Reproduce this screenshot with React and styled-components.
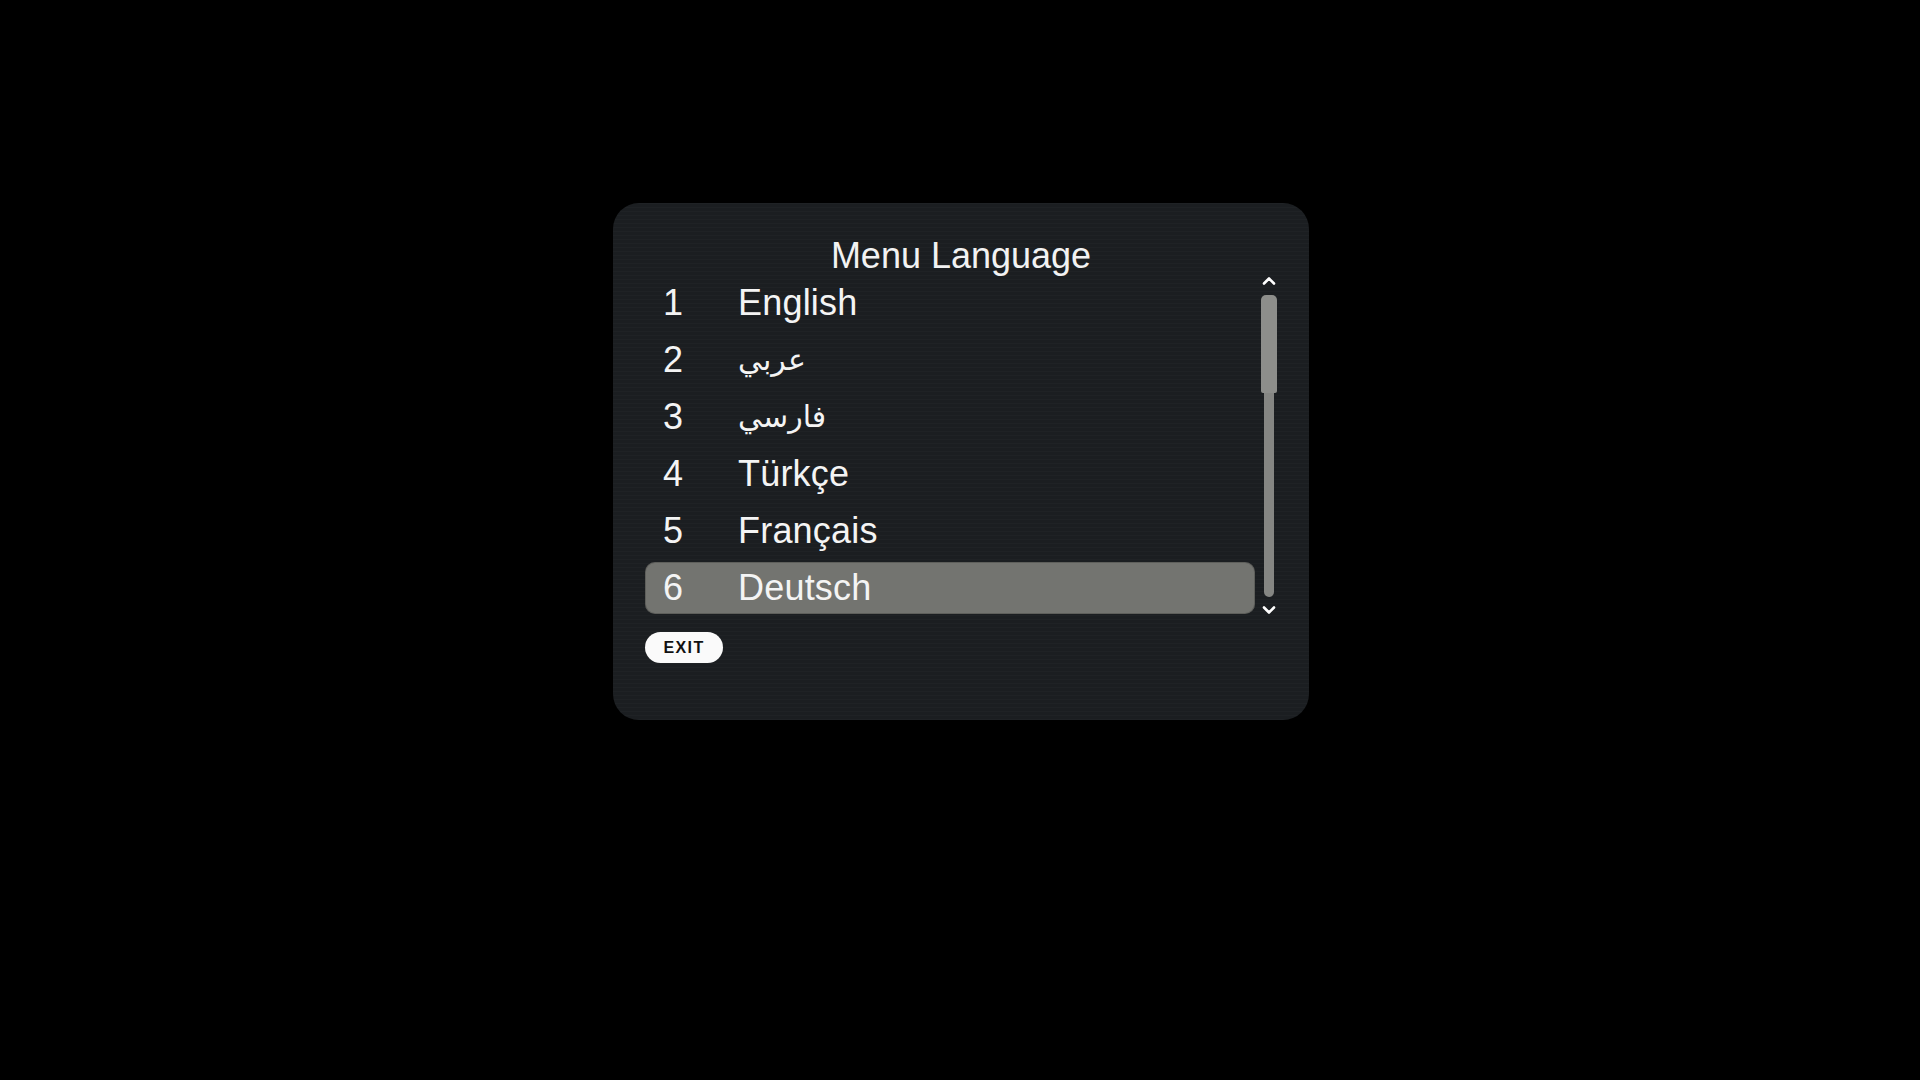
import React from "react";
import styled, { createGlobalStyle } from "styled-components";

const languages = [
  { n: 1, label: "English" },
  { n: 2, label: "عربي", rtl: true },
  { n: 3, label: "فارسي", rtl: true },
  { n: 4, label: "Türkçe" },
  { n: 5, label: "Français" },
  { n: 6, label: "Deutsch" },
];

const selected = 6;

const Chevron = ({ up }) => (
  <svg width="14" height="8" viewBox="0 0 14 8">
    <polyline
      points={up ? "2,6.5 7,1.5 12,6.5" : "2,1.5 7,6.5 12,1.5"}
      fill="none"
      stroke="#ffffff"
      strokeWidth="2.6"
      strokeLinecap="round"
      strokeLinejoin="round"
    />
  </svg>
);

const App = () => {
  return (
    <Screen>
      <GlobalStyle />
      <Panel>
        <Title>Menu Language</Title>
        <Body>
          <List>
            {languages.map((l) => (
              <Row key={l.n} active={l.n === selected}>
                <Num>{l.n}</Num>
                <Label dir={l.rtl ? "rtl" : "ltr"} rtl={l.rtl}>
                  {l.label}
                </Label>
              </Row>
            ))}
          </List>
          <Scroll>
            <ArrowUp>
              <Chevron up />
            </ArrowUp>
            <Thumb />
            <Track />
            <ArrowDown>
              <Chevron />
            </ArrowDown>
          </Scroll>
        </Body>
        <ExitButton>EXIT</ExitButton>
      </Panel>
    </Screen>
  );
};

export default App;

const GlobalStyle = createGlobalStyle`
  body {
    margin: 0;
    background: #000;
    font-family: "Liberation Sans", "DejaVu Sans", Arial, sans-serif;
  }
`;

const Screen = styled.div`
  width: 1920px;
  height: 1080px;
  background: #000;
  display: flex;
  justify-content: center;
  align-items: flex-start;
  padding-top: 203px;
  box-sizing: border-box;
`;

const Panel = styled.div`
  width: 696px;
  height: 517px;
  box-sizing: border-box;
  margin-left: 2px;
  padding: 33px 32px 0 32px;
  border-radius: 26px;
  background-color: #1b1e21;
  background-image: repeating-linear-gradient(
    0deg,
    rgba(255, 255, 255, 0.018) 0px,
    rgba(255, 255, 255, 0.018) 1px,
    transparent 1px,
    transparent 4px
  );
  display: flex;
  flex-direction: column;
`;

const Title = styled.div`
  font-size: 36px;
  line-height: 40px;
  height: 41px;
  color: #f2f2f2;
  text-align: center;
`;

const Body = styled.div`
  display: flex;
  gap: 6px;
  height: 337px;
`;

const List = styled.div`
  width: 610px;
  display: flex;
  flex-direction: column;
  gap: 5px;
`;

const Row = styled.div`
  height: 52px;
  display: flex;
  align-items: center;
  padding-left: 18px;
  border-radius: 10px;
  background: ${(p) => (p.active ? "#737470" : "transparent")};
  box-shadow: ${(p) => (p.active ? "inset 0 0 0 1px rgba(0,0,0,0.18)" : "none")};
  color: #f4f4f4;
  font-size: 36px;
  line-height: 52px;
`;

const Num = styled.span`
  width: 75px;
  flex-shrink: 0;
`;

const Label = styled.span`
  font-family: "Liberation Sans", "DejaVu Sans", sans-serif;
  font-size: ${(p) => (p.rtl ? "30px" : "36px")};
  letter-spacing: 0.2px;
  unicode-bidi: isolate;
`;

const Scroll = styled.div`
  width: 16px;
  display: flex;
  flex-direction: column;
  align-items: center;
`;

const ArrowUp = styled.div`
  height: 8px;
  margin-bottom: 10px;
  display: flex;
`;

const ArrowDown = styled.div`
  height: 8px;
  margin-top: 9px;
  display: flex;
`;

const Thumb = styled.div`
  width: 16px;
  height: 98px;
  flex-shrink: 0;
  background: #8d8e8b;
  border-radius: 5px 5px 2px 2px;
`;

const Track = styled.div`
  width: 10px;
  flex: 1;
  background: #858683;
  border-radius: 0 0 5px 5px;
`;

const ExitButton = styled.div`
  margin-top: 18px;
  width: 78px;
  height: 31px;
  border-radius: 16px;
  background: #fafafa;
  color: #111;
  font-size: 16px;
  font-weight: 700;
  letter-spacing: 1.4px;
  display: flex;
  align-items: center;
  justify-content: center;
`;
